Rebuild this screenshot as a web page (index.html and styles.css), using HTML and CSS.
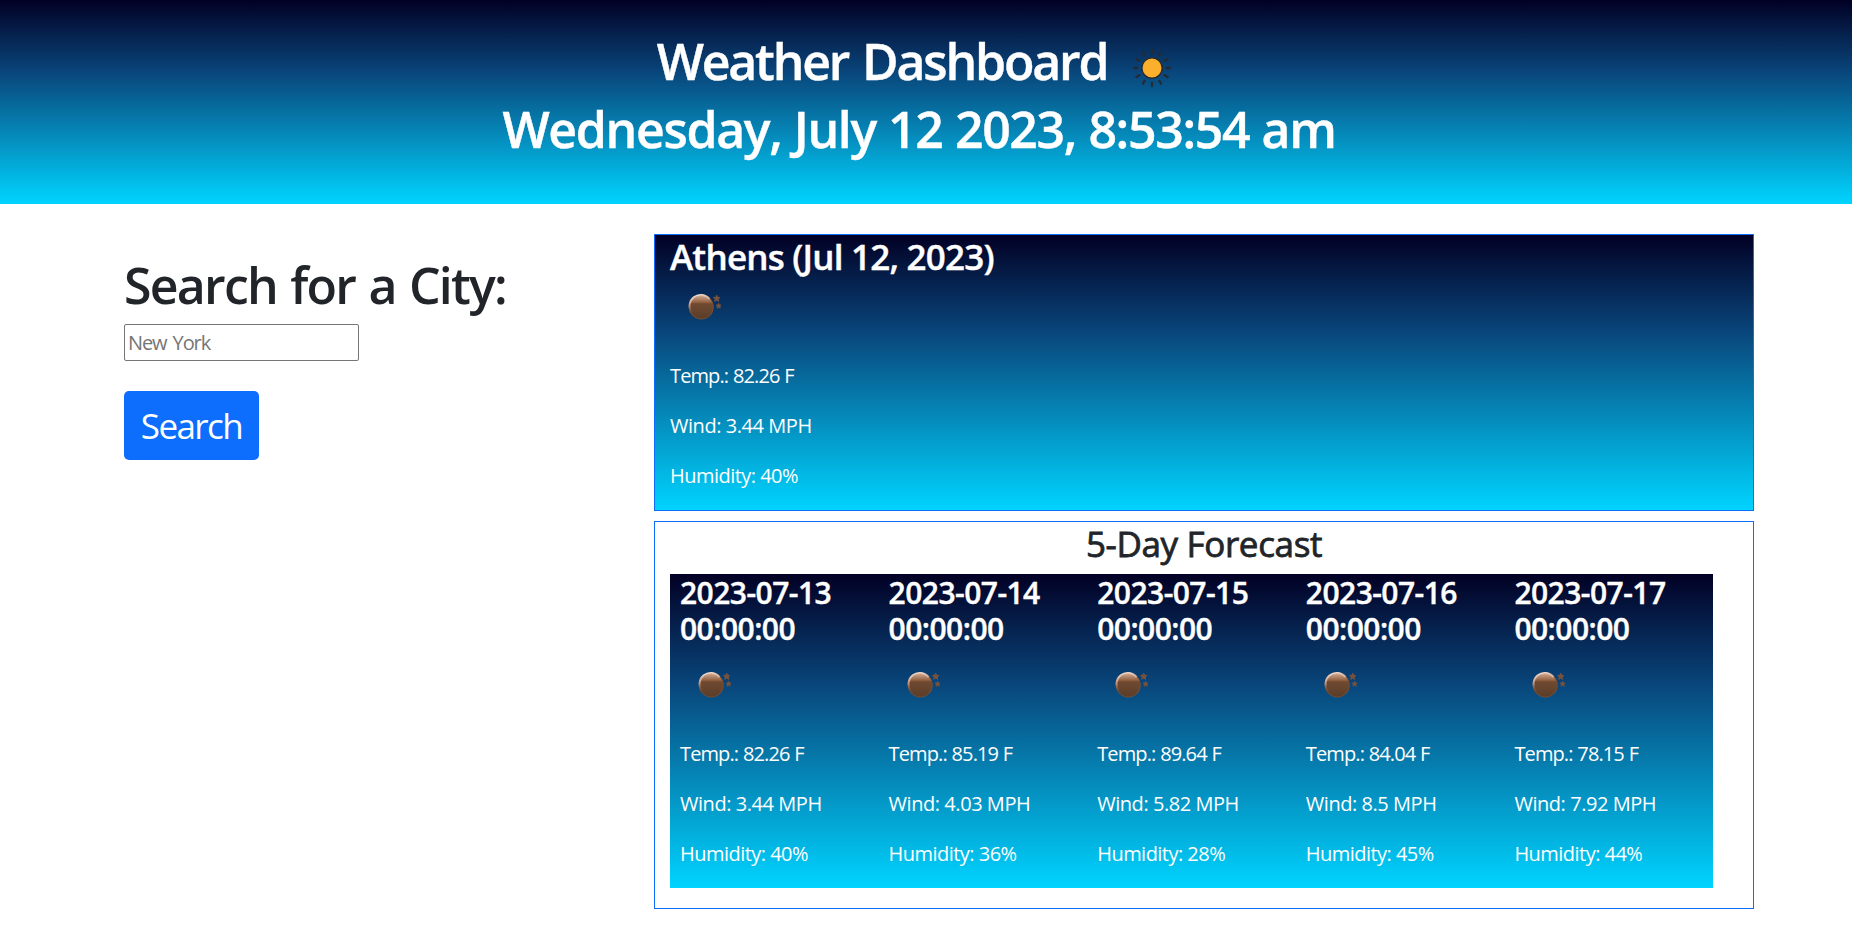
FILE: index.html
```
<!DOCTYPE html>
<html lang="en">
<head>
<meta charset="utf-8">
<title>Weather Dashboard</title>
<link rel="stylesheet" href="styles.css">
</head>
<body>
<svg class="sprite" aria-hidden="true">
  <defs>
    <linearGradient id="moon-fill" x1="0" y1="0" x2="0" y2="1">
      <stop offset="0" stop-color="#d3ab94"/>
      <stop offset=".3" stop-color="#91603f"/>
      <stop offset=".36" stop-color="#6f4a31"/>
      <stop offset="1" stop-color="#5b3d29"/>
    </linearGradient>
    <linearGradient id="moon-rim" x1=".3" y1="0" x2=".5" y2="1">
      <stop offset="0" stop-color="#f0ddd0"/>
      <stop offset=".5" stop-color="#c4937a"/>
      <stop offset="1" stop-color="#6b452d" stop-opacity="0"/>
    </linearGradient>
    <symbol id="moon" viewBox="0 0 50 50">
      <circle cx="21.300" cy="25" r="12.500" fill="#7a4e34"/>
      <circle cx="21.300" cy="25" r="11.600" fill="url(#moon-fill)"/>
      <path d="M11.900 31a11 11 0 0 1 17.600-13.900" fill="none" stroke="url(#moon-rim)" stroke-width="1.900"/>
      <path d="M36.700 13.200l.9 2.100 2.300.2-1.800 1.500.6 2.300-2-1.200-2 1.200.6-2.300-1.800-1.500 2.300-.2zM38.600 21.400l.7 1.600 1.800.2-1.300 1.200.4 1.800-1.600-1-1.600 1 .4-1.800-1.300-1.200 1.800-.2z" fill="#77533e" stroke="#77533e" stroke-width="1"/>
    </symbol>
  </defs>
</svg>
<header class="page-header">
  <h1 class="title">Weather Dashboard
    <svg class="sun" viewBox="0 0 40 40" aria-hidden="true">
      <g stroke="#262a33" stroke-width="2.300" stroke-linecap="round">
        <path d="M20 2v3.400M20 34.600v3.400M2 20h3.400M34.600 20H38M11 4.400l1.700 2.950M27.300 32.650L29 35.600M4.400 11l2.950 1.700M32.650 27.300L35.600 29M29 4.400l-1.700 2.950M12.700 32.650L11 35.600M35.600 11l-2.950 1.700M7.350 27.300L4.400 29"/>
      </g>
      <circle cx="20" cy="20" r="10.200" fill="#fbb02d" stroke="#2b2a2e" stroke-width="1.500"/>
    </svg>
  </h1>
  <h1 class="clock">Wednesday, July 12 2023, 8:53:54 am</h1>
</header>
<main class="layout">
  <section class="search">
    <h1 class="search-title">Search for a City:</h1>
    <input class="city-input" type="text" placeholder="New York">
    <button class="search-button">Search</button>
  </section>
  <div class="results">
    <section class="current">
      <h3 class="city">Athens (Jul 12, 2023)</h3>
      <svg class="icon"><use href="#moon"/></svg>
      <p class="temp">Temp.: 82.26 F</p><p class="wind">Wind: 3.44 MPH</p><p class="hum">Humidity: 40%</p>
    </section>
    <section class="forecast">
      <h3 class="forecast-title">5-Day Forecast</h3>
      <div class="days">
        <article class="day"><h4 class="date">2023-07-13 00:00:00</h4><svg class="icon"><use href="#moon"/></svg><p class="temp">Temp.: 82.26 F</p><p class="wind">Wind: 3.44 MPH</p><p class="hum">Humidity: 40%</p></article>
        <article class="day"><h4 class="date">2023-07-14 00:00:00</h4><svg class="icon"><use href="#moon"/></svg><p class="temp">Temp.: 85.19 F</p><p class="wind">Wind: 4.03 MPH</p><p class="hum">Humidity: 36%</p></article>
        <article class="day"><h4 class="date">2023-07-15 00:00:00</h4><svg class="icon"><use href="#moon"/></svg><p class="temp">Temp.: 89.64 F</p><p class="wind">Wind: 5.82 MPH</p><p class="hum">Humidity: 28%</p></article>
        <article class="day"><h4 class="date">2023-07-16 00:00:00</h4><svg class="icon"><use href="#moon"/></svg><p class="temp">Temp.: 84.04 F</p><p class="wind">Wind: 8.5 MPH</p><p class="hum">Humidity: 45%</p></article>
        <article class="day"><h4 class="date">2023-07-17 00:00:00</h4><svg class="icon"><use href="#moon"/></svg><p class="temp">Temp.: 78.15 F</p><p class="wind">Wind: 7.92 MPH</p><p class="hum">Humidity: 44%</p></article>
      </div>
    </section>
  </div>
</main>
</body>
</html>
```
FILE: styles.css
```
* { box-sizing: border-box; }
body { margin: 0; background: #fff; color: #212529; font: 20px/30px "Open Sans", "Noto Sans", sans-serif; }
h1, h3, h4, p { margin: 0; }
.sprite { display: block; width: 0; height: 0; }
.page-header, .current, .days { background: linear-gradient(180deg, #020024 0%, #09457a 35%, #00d4ff 100%); color: #fff; }
.page-header { height: 204px; padding: 31px 14px 0 0; display: flex; flex-direction: column; align-items: center; gap: 8px; }
.title, .clock, .search-title { font-size: 50px; line-height: 60px; font-weight: 600; white-space: nowrap; }
.title, .clock, .city, .date { -webkit-text-stroke: .4px currentColor; }
.title { display: flex; align-items: center; gap: 25px; letter-spacing: -2.2px; word-spacing: 3px; margin-right: 9px; }
.clock { letter-spacing: -1.36px; word-spacing: .7px; }
.search-title { letter-spacing: -1.75px; word-spacing: 2px; }
.sun { width: 40px; height: 40px; margin-top: 14px; }
.layout { display: grid; grid-template-columns: 530px 1100px; padding: 30px 0 0 124px; }
.search { display: flex; flex-direction: column; align-items: flex-start; padding-top: 21px; }
.city-input { width: 235px; height: 37px; margin-top: 9px; padding: 1px 3px; border: 1px solid #767676; border-radius: 2px; font: inherit; letter-spacing: -1.1px; word-spacing: 2px; }
.city-input::placeholder { color: #757575; }
.search-button { margin-top: 30px; width: 135px; height: 69px; border: 0; border-radius: 5px; background: #0d6efd; color: #fff; font: 35px/52px "Open Sans", sans-serif; letter-spacing: -1.57px; }
.results { display: flex; flex-direction: column; gap: 10px; }
.current { height: 277px; border: 1px solid #0d6efd; padding: 1px 15px 0; }
.city, .forecast-title { font-size: 35px; line-height: 42px; font-weight: 600; letter-spacing: -.78px; }
.icon { display: block; width: 50px; height: 50px; margin: 4px 0 29px 10px; }
p { margin-bottom: 20px; }
.temp { letter-spacing: -.88px; word-spacing: .4px; }
.wind { letter-spacing: -.45px; }
.hum { letter-spacing: -.53px; }
.forecast { height: 388px; border: 1px solid #0d6efd; padding: 1px 40px 0 15px; }
.forecast-title { font-weight: 400; -webkit-text-stroke: .8px currentColor; letter-spacing: -.36px; text-align: center; margin: 0 -25px 9px 0; }
.days { display: grid; grid-template-columns: repeat(5, 1fr); height: 314px; }
.day { padding: 1px 0 0 10px; }
.date { font-size: 30px; line-height: 36px; font-weight: 600; letter-spacing: -.54px; width: 170px; }
.day .icon { margin-top: 13px; }
```
